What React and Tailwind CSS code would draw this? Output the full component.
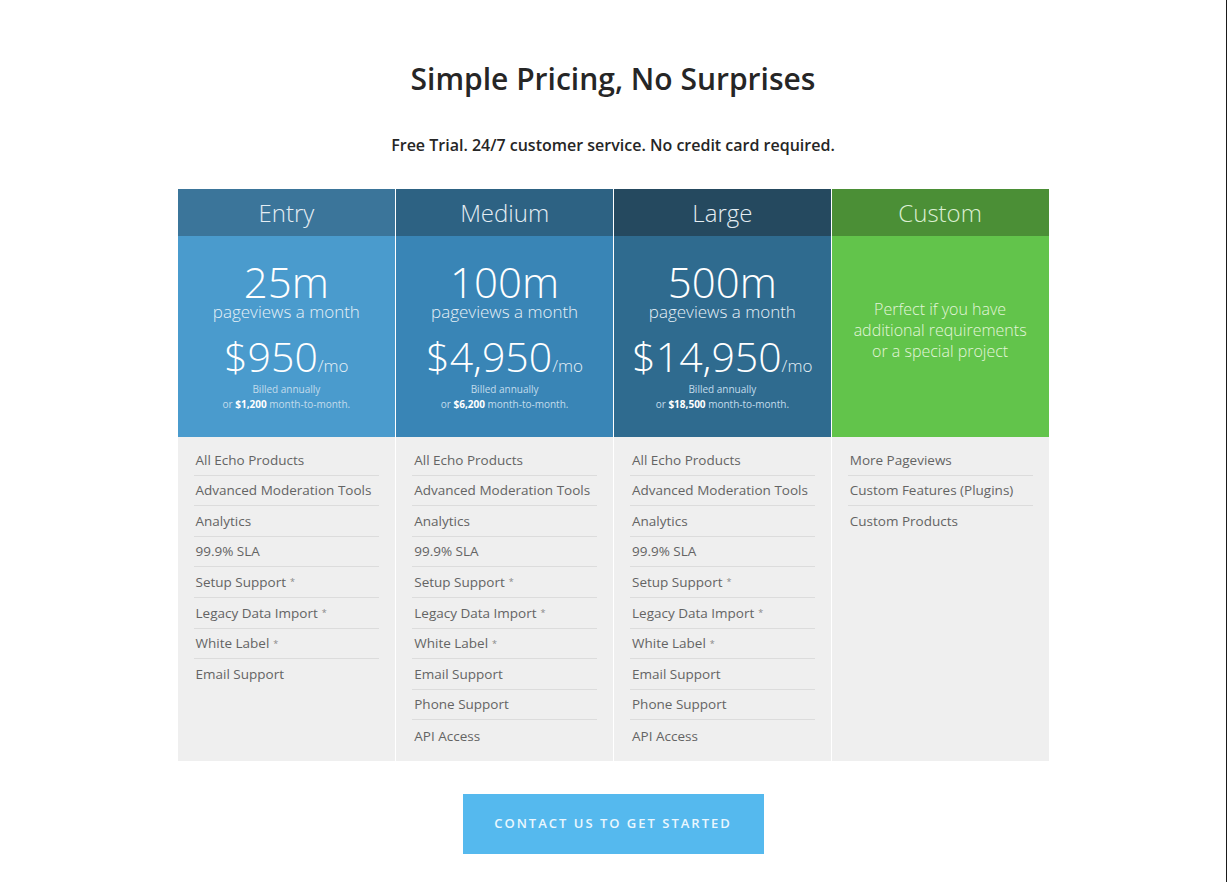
import React from "react";

const plans = [
  {
    name: "Entry",
    head: "bg-[#3b759a]",
    body: "bg-[#4a9bcd]",
    views: "25m",
    price: "$950",
    alt: "$1,200",
    features: [
      ["All Echo Products"],
      ["Advanced Moderation Tools"],
      ["Analytics"],
      ["99.9% SLA"],
      ["Setup Support", true],
      ["Legacy Data Import", true],
      ["White Label", true],
      ["Email Support"],
    ],
  },
  {
    name: "Medium",
    head: "bg-[#2d6283]",
    body: "bg-[#3985b6]",
    views: "100m",
    price: "$4,950",
    alt: "$6,200",
    features: [
      ["All Echo Products"],
      ["Advanced Moderation Tools"],
      ["Analytics"],
      ["99.9% SLA"],
      ["Setup Support", true],
      ["Legacy Data Import", true],
      ["White Label", true],
      ["Email Support"],
      ["Phone Support"],
      ["API Access"],
    ],
  },
  {
    name: "Large",
    head: "bg-[#25495f]",
    body: "bg-[#2f6b8f]",
    views: "500m",
    price: "$14,950",
    alt: "$18,500",
    features: [
      ["All Echo Products"],
      ["Advanced Moderation Tools"],
      ["Analytics"],
      ["99.9% SLA"],
      ["Setup Support", true],
      ["Legacy Data Import", true],
      ["White Label", true],
      ["Email Support"],
      ["Phone Support"],
      ["API Access"],
    ],
  },
];

const customFeatures = [["More Pageviews"], ["Custom Features (Plugins)"], ["Custom Products"]];

function Features({ items }) {
  return (
    <ul className="px-4 pt-2 flex-1 bg-[#efefef]">
      {items.map(([t, star], i) => (
        <li
          key={i}
          className={`h-[30.6px] flex items-center pl-0.5 text-[13.5px] text-[#646464] ${
            i < items.length - 1 ? "border-b border-[#dcdcdc]" : ""
          }`}
        >
          {t}
          {star && <span className="ml-1 text-[9px] text-[#888]">*</span>}
        </li>
      ))}
    </ul>
  );
}

export default function App() {
  return (
    <div
      className="min-h-[882px] w-full bg-white border-r border-[#1a1a1a] flex flex-col items-center"
      style={{ fontFamily: '"Open Sans", "Noto Sans", sans-serif' }}
    >
      <h1 className="mt-[58px] text-[30px] leading-[42px] font-semibold text-[#262626]">
        Simple Pricing, No Surprises
      </h1>
      <p className="mt-[34px] text-[16px] leading-[22px] font-semibold text-[#262626]">
        Free Trial. 24/7 customer service. No credit card required.
      </p>

      <div className="mt-[33px] w-[871px] grid grid-cols-4">
        {plans.map((p, idx) => (
          <div key={p.name} className={`flex flex-col ${idx > 0 ? "border-l border-white/50" : ""}`}>
            <div className={`${p.head} h-[47px] flex items-center justify-center text-[24px] font-light text-[#e4edf3]`}>
              {p.name}
            </div>
            <div className={`${p.body} h-[201px] flex flex-col items-center text-white`}>
              <div className="mt-[26px] text-[42px] leading-[40px] font-light">{p.views}</div>
              <div className="text-[17px] leading-[20px] font-light text-[#e6f0f7]">pageviews a month</div>
              <div className="mt-[11px] flex items-baseline h-[46px]">
                <span className="text-[41px] leading-[46px] font-light">{p.price}</span>
                <span className="text-[17px] font-light text-[#e6f0f7]">/mo</span>
              </div>
              <div className="mt-[3px] text-[10px] leading-[15px] text-[#c2dcec]">Billed annually</div>
              <div className="text-[10px] leading-[15px] text-[#c2dcec]">
                or <span className="font-bold text-white">{p.alt}</span> month-to-month.
              </div>
            </div>
            <div className="h-[324px] flex flex-col">
              <Features items={p.features} />
            </div>
          </div>
        ))}
        <div className="flex flex-col border-l border-white/50">
          <div className="bg-[#4b8f36] h-[47px] flex items-center justify-center text-[24px] font-light text-[#dcefd3]">
            Custom
          </div>
          <div className="bg-[#62c44b] h-[201px] flex flex-col items-center text-center">
            <p className="mt-[63px] text-[16px] leading-[21px] font-light text-[#e2f5da]">
              Perfect if you have
              <br />
              additional requirements
              <br />
              or a special project
            </p>
          </div>
          <div className="h-[324px] flex flex-col">
            <Features items={customFeatures} />
          </div>
        </div>
      </div>

      <button className="mt-[33px] w-[301px] h-[60px] bg-[#55b9ee] text-[#eaf7fe] text-[13px] font-semibold tracking-[2px] uppercase">
        Contact us to get started
      </button>
    </div>
  );
}
